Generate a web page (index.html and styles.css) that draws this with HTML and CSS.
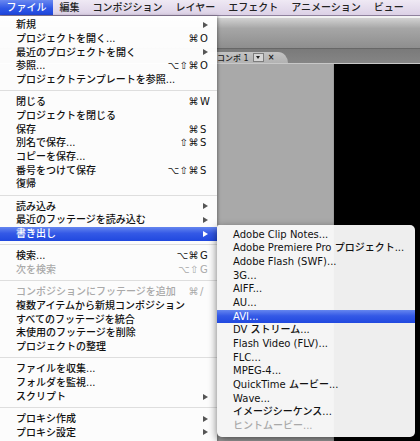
FILE: index.html
```html
<!DOCTYPE html>
<html lang="ja">
<head>
<meta charset="utf-8">
<title>ファイル メニュー</title>
<link rel="stylesheet" href="styles.css">
</head>
<body>
<div class="menubar">
  <span class="mb-item active">ファイル</span>
  <span class="mb-item">編集</span>
  <span class="mb-item">コンポジション</span>
  <span class="mb-item">レイヤー</span>
  <span class="mb-item">エフェクト</span>
  <span class="mb-item">アニメーション</span>
  <span class="mb-item">ビュー</span>
</div>

<div class="app">
  <div class="strip"></div>
  <div class="toolbar"></div>
  <div class="tabbar">
    <div class="tab">
      <span class="tab-title">コンポ 1</span>
      <span class="tab-btn"><span class="tab-caret"></span></span>
      <span class="tab-x">×</span>
    </div>
  </div>
  <div class="content">
    <div class="panel"></div>
    <div class="viewer"></div>
  </div>
</div>

<div class="menu main-menu">
  <div class="item"><span class="label">新規</span><span class="arrow"></span></div>
  <div class="item"><span class="label">プロジェクトを開く...</span><span class="mods">⌘</span><span class="key">O</span></div>
  <div class="item"><span class="label">最近のプロジェクトを開く</span><span class="arrow"></span></div>
  <div class="item"><span class="label">参照...</span><span class="mods">⌥⇧⌘</span><span class="key">O</span></div>
  <div class="item"><span class="label">プロジェクトテンプレートを参照...</span></div>
  <div class="sep"></div>
  <div class="item"><span class="label">閉じる</span><span class="mods">⌘</span><span class="key">W</span></div>
  <div class="item"><span class="label">プロジェクトを閉じる</span></div>
  <div class="item"><span class="label">保存</span><span class="mods">⌘</span><span class="key">S</span></div>
  <div class="item"><span class="label">別名で保存...</span><span class="mods">⇧⌘</span><span class="key">S</span></div>
  <div class="item"><span class="label">コピーを保存...</span></div>
  <div class="item"><span class="label">番号をつけて保存</span><span class="mods">⌥⇧⌘</span><span class="key">S</span></div>
  <div class="item"><span class="label">復帰</span></div>
  <div class="sep"></div>
  <div class="item"><span class="label">読み込み</span><span class="arrow"></span></div>
  <div class="item"><span class="label">最近のフッテージを読み込む</span><span class="arrow"></span></div>
  <div class="item selected"><span class="label">書き出し</span><span class="arrow"></span></div>
  <div class="sep"></div>
  <div class="item"><span class="label">検索...</span><span class="mods">⌥⌘</span><span class="key">G</span></div>
  <div class="item disabled"><span class="label">次を検索</span><span class="mods">⌥⇧</span><span class="key">G</span></div>
  <div class="sep"></div>
  <div class="item disabled"><span class="label">コンポジションにフッテージを追加</span><span class="mods">⌘</span><span class="key">/</span></div>
  <div class="item"><span class="label">複数アイテムから新規コンポジション</span></div>
  <div class="item"><span class="label">すべてのフッテージを統合</span></div>
  <div class="item"><span class="label">未使用のフッテージを削除</span></div>
  <div class="item"><span class="label">プロジェクトの整理</span></div>
  <div class="sep"></div>
  <div class="item"><span class="label">ファイルを収集...</span></div>
  <div class="item"><span class="label">フォルダを監視...</span></div>
  <div class="item"><span class="label">スクリプト</span><span class="arrow"></span></div>
  <div class="sep"></div>
  <div class="item"><span class="label">プロキシ作成</span><span class="arrow"></span></div>
  <div class="item"><span class="label">プロキシ設定</span><span class="arrow"></span></div>
</div>

<div class="menu sub-menu">
  <div class="item"><span class="label">Adobe Clip Notes...</span></div>
  <div class="item"><span class="label">Adobe Premiere Pro プロジェクト...</span></div>
  <div class="item"><span class="label">Adobe Flash (SWF)...</span></div>
  <div class="item"><span class="label">3G...</span></div>
  <div class="item"><span class="label">AIFF...</span></div>
  <div class="item"><span class="label">AU...</span></div>
  <div class="item selected"><span class="label">AVI...</span></div>
  <div class="item"><span class="label">DV ストリーム...</span></div>
  <div class="item"><span class="label">Flash Video (FLV)...</span></div>
  <div class="item"><span class="label">FLC...</span></div>
  <div class="item"><span class="label">MPEG-4...</span></div>
  <div class="item"><span class="label">QuickTime ムービー...</span></div>
  <div class="item"><span class="label">Wave...</span></div>
  <div class="item"><span class="label">イメージシーケンス...</span></div>
  <div class="item disabled"><span class="label">ヒントムービー...</span></div>
</div>
</body>
</html>
```

FILE: styles.css
```css
html, body {
  margin: 0;
  padding: 0;
}
body {
  width: 420px;
  height: 441px;
  overflow: hidden;
  position: relative;
  background: #a9a9a9;
  font-family: "DejaVu Sans", "Noto Sans CJK JP", sans-serif;
  font-size: 10px;
  font-weight: 500;
  color: #111;
}

/* ---------- menu bar ---------- */
.menubar {
  display: flex;
  height: 15px;
  line-height: 15px;
  background: linear-gradient(#efe9f4, #dcd1e6);
  border-bottom: 1px solid #8f819d;
}
.mb-item {
  padding: 0 6.5px;
  color: #222;
  white-space: nowrap;
}
.mb-item.active {
  color: #fff;
  background: linear-gradient(#6a88f0, #2f57e6 55%, #1f47dd);
}

/* ---------- application background ---------- */
.app {
  display: flex;
  flex-direction: column;
  height: 425px;
}
.strip {
  height: 2px;
  background: #f2f2f2;
}
.toolbar {
  height: 30px;
  background: linear-gradient(#d2d2d2, #a6a6a6 35%, #8e8e8e);
  border-bottom: 1px solid #676767;
}
.tabbar {
  height: 14px;
  display: flex;
  align-items: flex-end;
  padding-left: 206px;
  background: linear-gradient(#7a7a7a, #858585);
  border-bottom: 1px solid #c8c8c8;
}
.tab {
  display: flex;
  align-items: center;
  height: 11px;
  padding: 0 14px 0 11px;
  gap: 4px;
  background: linear-gradient(#c3c3c3, #b2b2b2);
  border-top-right-radius: 10px 11px;
  font-size: 8px;
  color: #1a1a1a;
}
.tab-title {
  white-space: nowrap;
}
.tab-btn {
  display: flex;
  align-items: center;
  justify-content: center;
  width: 9px;
  height: 7px;
  border: 1px solid #7d7d7d;
  background: #d6d6d6;
}
.tab-caret {
  width: 0;
  height: 0;
  border-left: 2.5px solid transparent;
  border-right: 2.5px solid transparent;
  border-top: 3px solid #222;
}
.tab-x {
  font-size: 8px;
  font-weight: bold;
  color: #222;
}
.content {
  flex: 1;
  display: flex;
}
.panel {
  width: 334px;
  background: #a9a9a9;
  border-right: 1px solid #9c9c9c;
  box-sizing: border-box;
}
.viewer {
  flex: 1;
  background: #000;
}

/* ---------- menus ---------- */
.menu {
  position: absolute;
  box-sizing: border-box;
}
.main-menu {
  left: 0;
  top: 16px;
  width: 217px;
  padding: 2.2px 0 6px;
  background: rgba(255, 255, 255, 0.97);
  box-shadow: 1px 0 3px rgba(0, 0, 0, 0.35);
}
.sub-menu {
  left: 217px;
  top: 224.5px;
  width: 198px;
  padding: 3px 0 4px;
  background: rgba(248, 248, 248, 0.96);
  border-radius: 2px 5px 5px 5px;
  box-shadow: 0 3px 9px rgba(0, 0, 0, 0.55);
}
.item {
  display: flex;
  align-items: center;
  height: 13.7px;
  line-height: 13.7px;
  padding: 0 7px 0 16px;
  white-space: nowrap;
  color: #111;
}
.label {
  flex: 1;
}
.mods {
  text-align: right;
  letter-spacing: 0.5px;
}
.key {
  width: 10px;
  margin-left: 1px;
  text-align: left;
}
.arrow {
  width: 0;
  height: 0;
  margin-right: 2px;
  border-top: 3px solid transparent;
  border-bottom: 3px solid transparent;
  border-left: 5px solid #555;
}
.item.disabled {
  color: #a9a9a9;
}
.item.selected {
  color: #fff;
  background: linear-gradient(#6586ef, #3459e6 45%, #2048df);
}
.item.selected .arrow {
  border-left-color: #fff;
}
.sep {
  height: 8.6px;
  display: flex;
  align-items: center;
}
.sep::before {
  content: "";
  flex: 1;
  height: 1px;
  background: #dedede;
}
```
